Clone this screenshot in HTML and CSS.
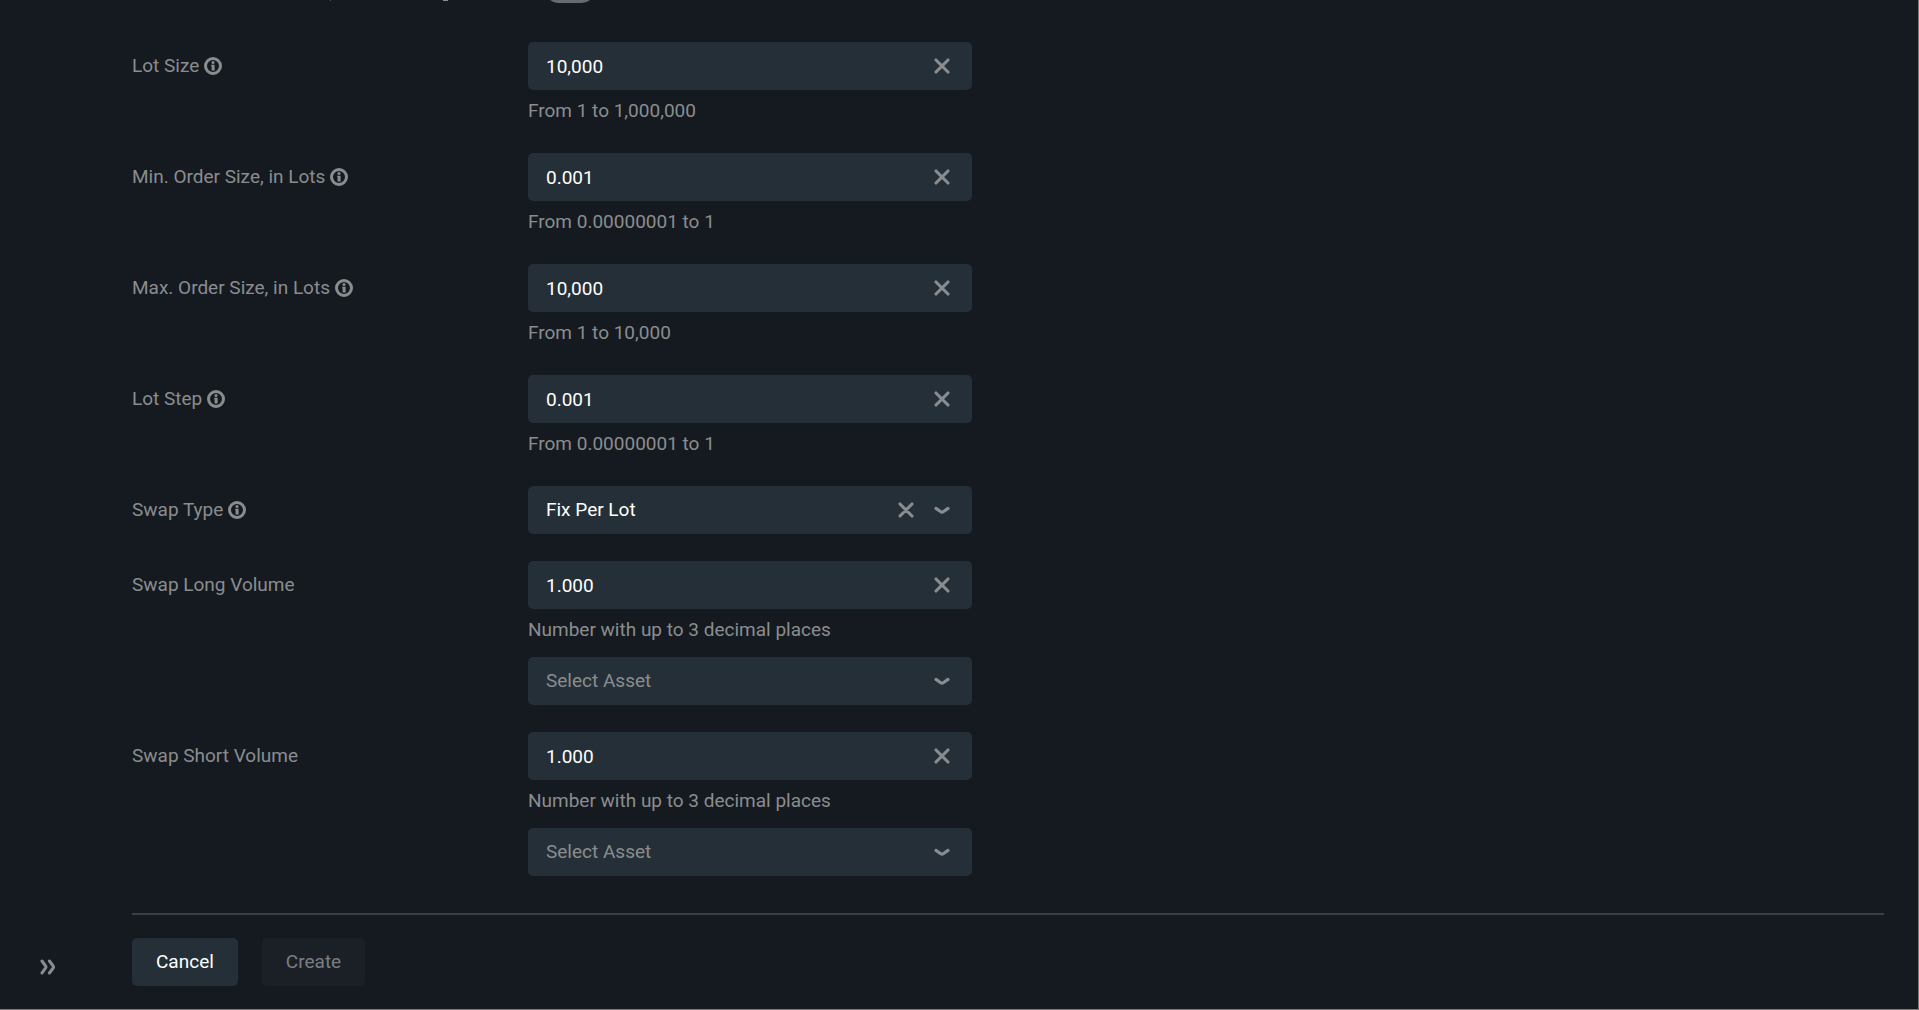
FILE: index.html
```
<!DOCTYPE html>
<html lang="en">
<head>
    <meta charset="utf-8">
    <title>Create</title>
    <link rel="stylesheet" href="styles.css">
</head>
<body>

<!-- shared icons -->
<svg class="sprite" aria-hidden="true">
    <symbol id="info" viewBox="0 0 18 18">
        <circle cx="9" cy="9" r="7.5" fill="none" stroke="currentColor" stroke-width="3"/>
        <circle cx="9" cy="5.6" r="1.5" fill="currentColor"/>
        <path d="M7.2 7.7h3.4v5.7H7.6V9.2h-.4z" fill="currentColor"/>
    </symbol>
    <symbol id="cross" viewBox="0 0 16 16">
        <path d="M2 2l12 12M14 2L2 14" fill="none" stroke="currentColor" stroke-width="3.1" stroke-linecap="round"/>
    </symbol>
    <symbol id="chevron" viewBox="0 0 16 16">
        <path d="M2 6.4L6.8 9.7Q8 10.5 9.2 9.7L14 6.4" fill="none" stroke="currentColor" stroke-width="3.1" stroke-linecap="round"/>
    </symbol>
</svg>

<div class="app">
    <aside class="sidebar">
        <button type="button" class="expand" aria-label="Expand menu">
            <svg width="16" height="16" viewBox="0 0 16 16" fill="none" stroke="currentColor" stroke-width="3" stroke-linecap="round">
                <path d="M2 2L5.6 7Q6.3 8 5.6 9L2 14M9.4 2L13.2 7Q13.9 8 13.2 9L9.4 14"/>
            </svg>
        </button>
    </aside>

    <form class="content">
        <div class="scrolled">
            <span class="tail tail-small"></span>
            <span class="tail"></span>
            <input type="checkbox" class="toggle" aria-label="Toggle">
        </div>

        <div class="rows">
            <div class="row">
                <label for="lot-size">Lot Size <svg class="info"><use href="#info"/></svg></label>
                <div class="control">
                    <div class="field">
                        <input type="text" id="lot-size" value="10,000">
                        <button type="button" aria-label="Clear"><svg><use href="#cross"/></svg></button>
                    </div>
                    <p class="hint">From 1 to 1,000,000</p>
                </div>
            </div>

            <div class="row">
                <label for="min-order">Min. Order Size, in Lots <svg class="info"><use href="#info"/></svg></label>
                <div class="control">
                    <div class="field">
                        <input type="text" id="min-order" value="0.001">
                        <button type="button" aria-label="Clear"><svg><use href="#cross"/></svg></button>
                    </div>
                    <p class="hint">From 0.00000001 to 1</p>
                </div>
            </div>

            <div class="row">
                <label for="max-order">Max. Order Size, in Lots <svg class="info"><use href="#info"/></svg></label>
                <div class="control">
                    <div class="field">
                        <input type="text" id="max-order" value="10,000">
                        <button type="button" aria-label="Clear"><svg><use href="#cross"/></svg></button>
                    </div>
                    <p class="hint">From 1 to 10,000</p>
                </div>
            </div>

            <div class="row">
                <label for="lot-step">Lot Step <svg class="info"><use href="#info"/></svg></label>
                <div class="control">
                    <div class="field">
                        <input type="text" id="lot-step" value="0.001">
                        <button type="button" aria-label="Clear"><svg><use href="#cross"/></svg></button>
                    </div>
                    <p class="hint">From 0.00000001 to 1</p>
                </div>
            </div>

            <div class="row">
                <label for="swap-type">Swap Type <svg class="info"><use href="#info"/></svg></label>
                <div class="control">
                    <div class="field">
                        <select id="swap-type">
                            <option>Fix Per Lot</option>
                        </select>
                        <button type="button" aria-label="Clear"><svg><use href="#cross"/></svg></button>
                        <span class="arrow"><svg><use href="#chevron"/></svg></span>
                    </div>
                </div>
            </div>

            <div class="row">
                <label for="swap-long">Swap Long Volume</label>
                <div class="control">
                    <div class="field">
                        <input type="text" id="swap-long" value="1.000">
                        <button type="button" aria-label="Clear"><svg><use href="#cross"/></svg></button>
                    </div>
                    <p class="hint">Number with up to 3 decimal places</p>
                    <div class="field">
                        <select class="empty" aria-label="Swap Long Asset">
                            <option>Select Asset</option>
                        </select>
                        <span class="arrow"><svg><use href="#chevron"/></svg></span>
                    </div>
                </div>
            </div>

            <div class="row">
                <label for="swap-short">Swap Short Volume</label>
                <div class="control">
                    <div class="field">
                        <input type="text" id="swap-short" value="1.000">
                        <button type="button" aria-label="Clear"><svg><use href="#cross"/></svg></button>
                    </div>
                    <p class="hint">Number with up to 3 decimal places</p>
                    <div class="field">
                        <select class="empty" aria-label="Swap Short Asset">
                            <option>Select Asset</option>
                        </select>
                        <span class="arrow"><svg><use href="#chevron"/></svg></span>
                    </div>
                </div>
            </div>
        </div>

        <footer class="actions">
            <button type="button" class="btn">Cancel</button>
            <button type="submit" class="btn" disabled>Create</button>
        </footer>
    </form>
</div>

</body>
</html>
```

FILE: styles.css
```
* {
    box-sizing: border-box;
}

body {
    margin: 0;
    background-color: #151a20;
    color: #8a8d8f;
    font-family: Roboto, sans-serif;
    font-size: 19px;
    line-height: 24px;
}

button, input, select {
    font: inherit;
    color: inherit;
}

.sprite {
    display: none;
}

.app {
    display: flex;
    min-height: 100vh;
    border-right: 1px solid #77797b;
    border-bottom: 1px solid #77797b;
}

.sidebar {
    display: flex;
    flex-direction: column;
    justify-content: flex-end;
    align-items: center;
    width: 96px;
    padding-bottom: 24px;
}

.expand {
    display: flex;
    justify-content: center;
    align-items: center;
    width: 36px;
    height: 36px;
    padding: 0;
    border: none;
    background: none;
    cursor: pointer;
}

.content {
    flex: 1;
    padding: 0 34px 23px 36px;
}

/* last pixels of the row that is scrolled out of view */
.scrolled {
    display: flex;
    align-items: flex-end;
    height: 3px;
    overflow: hidden;
}

.tail {
    align-self: flex-start;
    width: 5px;
    height: 1px;
    margin: 0 98px 0 112px;
    background-color: #8a8d8f;
}

.tail-small {
    width: 1px;
    margin: 0 0 0 198px;
    opacity: 0.5;
}

.toggle {
    appearance: none;
    flex: none;
    width: 48px;
    height: 24px;
    margin: 0;
    border-radius: 12px;
    background-color: #636b6e;
}

.rows {
    display: flex;
    flex-direction: column;
    gap: 27px;
    padding: 39px 0 37px;
}

.row {
    display: grid;
    grid-template-columns: 396px minmax(0, 444px);
    align-items: start;
}

label {
    display: flex;
    align-items: center;
    gap: 5px;
    min-height: 48px;
}

.info {
    width: 18px;
    height: 18px;
}

.field {
    display: flex;
    align-items: center;
    height: 48px;
    padding-right: 12px;
    border-radius: 5px;
    background-color: #252f37;
}

.field input, .field select {
    flex: 1;
    min-width: 0;
    height: 48px;
    padding: 0 0 0 18px;
    border: none;
    outline: none;
    background: none;
    appearance: none;
    color: #fff;
}

.field .empty {
    color: #8a8d8f;
}

.field button, .arrow {
    display: flex;
    justify-content: center;
    align-items: center;
    width: 36px;
    height: 36px;
    padding: 0;
    border: none;
    background: none;
}

.field svg {
    width: 16px;
    height: 16px;
}

.hint {
    margin: 0;
    padding: 9px 0 3px;
}

.hint + .field {
    margin-top: 12px;
}

.actions {
    display: flex;
    gap: 24px;
    padding-top: 23px;
    border-top: 2px solid #364046;
}

.btn {
    height: 48px;
    padding: 0 24px;
    border: none;
    border-radius: 5px;
    background-color: #252f37;
    color: #fff;
    cursor: pointer;
}

.btn:disabled {
    background-color: #1b2027;
    color: #7b7e81;
    cursor: default;
}
```
